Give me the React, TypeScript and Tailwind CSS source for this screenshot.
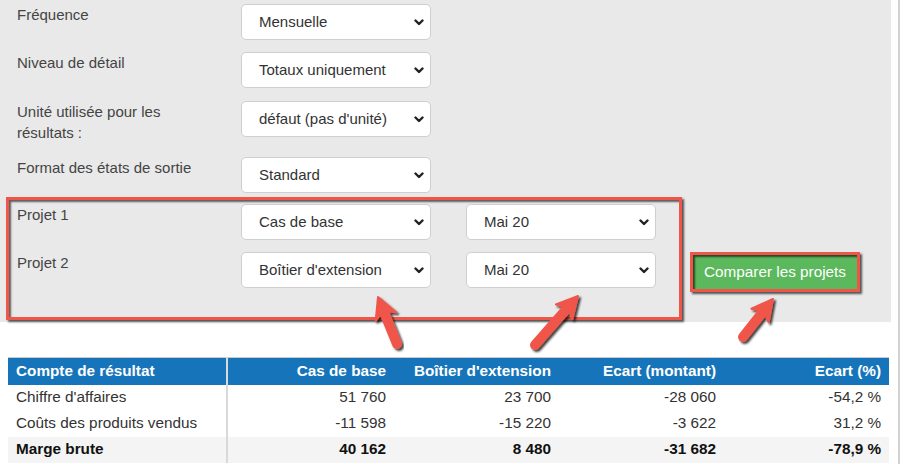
import React from 'react';

const RED = '#f0554a';

function Chevron() {
  return (
    <svg width="10" height="7" viewBox="0 0 10 7" className="shrink-0">
      <path d="M1.5 1.5 L5 5 L8.5 1.5" fill="none" stroke="#222" strokeWidth="2.4" strokeLinecap="round" strokeLinejoin="round" />
    </svg>
  );
}

function FakeSelect({ value }: { value: string }) {
  return (
    <div className="w-[190px] h-[36px] shrink-0 bg-white border border-[#cfcfcf] rounded-[5px] flex items-center justify-between pl-[17px] pr-[6px] text-[15px] text-[#333]">
      <span>{value}</span>
      <Chevron />
    </div>
  );
}

function Row({ label, children, className = '' }: { label: React.ReactNode; children: React.ReactNode; className?: string }) {
  return (
    <div className={`flex items-start ${className}`}>
      <div className="w-[241px] shrink-0 pl-[17px] pr-[20px] text-[15px] leading-[21px] text-[#444]">{label}</div>
      {children}
    </div>
  );
}

type Pt = [number, number];

function Arrow({ tail, tip }: { tail: Pt; tip: Pt }) {
  const dx = tip[0] - tail[0];
  const dy = tip[1] - tail[1];
  const len = Math.hypot(dx, dy);
  const ux = dx / len;
  const uy = dy / len;
  const nx = -uy;
  const ny = ux;
  const L = 18;
  const W = 11;
  const bx = tip[0] - ux * L;
  const by = tip[1] - uy * L;
  const head = [
    [tip[0], tip[1]],
    [bx + nx * W - ux * 3, by + ny * W - uy * 3],
    [bx + ux * 3, by + uy * 3],
    [bx - nx * W - ux * 3, by - ny * W - uy * 3],
  ]
    .map((p) => p.join(','))
    .join(' ');
  return (
    <g filter="url(#arrowShadow)">
      <line x1={tail[0]} y1={tail[1]} x2={bx + ux * 4} y2={by + uy * 4} stroke={RED} strokeWidth="10" strokeLinecap="round" />
      <polygon points={head} fill={RED} stroke={RED} strokeWidth="2" strokeLinejoin="round" />
    </g>
  );
}

const rows = [
  { label: "Chiffre d'affaires", vals: ['51 760', '23 700', '-28 060', '-54,2 %'], bold: false },
  { label: 'Coûts des produits vendus', vals: ['-11 598', '-15 220', '-3 622', '31,2 %'], bold: false },
  { label: 'Marge brute', vals: ['40 162', '8 480', '-31 682', '-78,9 %'], bold: true },
];

export default function App() {
  return (
    <div className="relative w-[903px] h-[464px] overflow-hidden bg-white font-['Liberation_Sans',Arial,sans-serif] flex">
      <div className="w-[891px] shrink-0">
        {/* options panel */}
        <div className="relative bg-[#e9e9e9] h-[322px] pt-[4px]">
          <Row label="Fréquence">
            <FakeSelect value="Mensuelle" />
          </Row>
          <Row label="Niveau de détail" className="mt-[12px]">
            <FakeSelect value="Totaux uniquement" />
          </Row>
          <Row label="Unité utilisée pour les résultats :" className="mt-[13px]">
            <FakeSelect value="défaut (pas d'unité)" />
          </Row>
          <Row label="Format des états de sortie" className="mt-[14px]">
            <FakeSelect value="Standard" />
          </Row>
          <Row label="Projet 1" className="mt-[11px]">
            <FakeSelect value="Cas de base" />
            <div className="ml-[35px]">
              <FakeSelect value="Mai 20" />
            </div>
          </Row>
          <Row label="Projet 2" className="mt-[12px]">
            <FakeSelect value="Boîtier d'extension" />
            <div className="ml-[35px]">
              <FakeSelect value="Mai 20" />
            </div>
            <button className="ml-[34px] w-[170px] h-[40px] bg-[#5cb85c] border-[3px] border-[#f0554a] text-white text-[15.3px] shadow-[2px_2px_2px_rgba(0,0,0,0.65),inset_2px_2px_2px_rgba(0,0,0,0.6)]">
              Comparer les projets
            </button>
          </Row>

          {/* annotation box */}
          <div className="absolute left-[6px] top-[197px] w-[676px] h-[123px] border-[3px] border-[#f0554a] shadow-[2px_2px_2px_rgba(0,0,0,0.65),inset_2px_2px_2px_rgba(0,0,0,0.6)] pointer-events-none" />
        </div>

        {/* results table */}
        <table className="ml-[8px] mt-[35px] w-[881px] table-fixed border-collapse text-[15.3px] text-[#333]">
          <colgroup>
            <col className="w-[219px]" />
            <col className="w-[165px]" />
            <col className="w-[165px]" />
            <col className="w-[165px]" />
            <col className="w-[167px]" />
          </colgroup>
          <thead>
            <tr className="bg-[#1675ba] text-white font-bold h-[27px] border-t border-[#c9c9c9]">
              <th className="text-left pl-[8px] font-bold border-r-2 border-[#d9d9d9]">Compte de résultat</th>
              <th className="text-right pr-[6px] font-bold">Cas de base</th>
              <th className="text-right pr-[6px] font-bold">Boîtier d'extension</th>
              <th className="text-right pr-[6px] font-bold">Ecart (montant)</th>
              <th className="text-right pr-[8px] font-bold">Ecart (%)</th>
            </tr>
          </thead>
          <tbody>
            {rows.map((r) => (
              <tr key={r.label} className={`h-[26px] ${r.bold ? 'bg-[#f4f4f4] font-bold text-[#111]' : 'bg-white'}`}>
                <td className="pl-[8px] border-r-2 border-[#d9d9d9] whitespace-nowrap">{r.label}</td>
                <td className="text-right pr-[6px]">{r.vals[0]}</td>
                <td className="text-right pr-[6px]">{r.vals[1]}</td>
                <td className="text-right pr-[6px]">{r.vals[2]}</td>
                <td className="text-right pr-[8px]">{r.vals[3]}</td>
              </tr>
            ))}
          </tbody>
        </table>
      </div>
      <div className="w-[7px] shrink-0" />
      <div className="w-[2px] shrink-0 bg-[#d2d2d2]" />

      {/* callout arrows */}
      <svg className="absolute inset-0 pointer-events-none" width="903" height="464">
        <defs>
          <filter id="arrowShadow" x="-30%" y="-30%" width="160%" height="160%">
            <feDropShadow dx="2" dy="2" stdDeviation="1.3" floodColor="#000" floodOpacity="0.75" />
          </filter>
        </defs>
        <Arrow tail={[397, 344]} tip={[378, 297]} />
        <Arrow tail={[535, 345]} tip={[578, 296]} />
        <Arrow tail={[743, 337]} tip={[773, 299]} />
      </svg>
    </div>
  );
}
